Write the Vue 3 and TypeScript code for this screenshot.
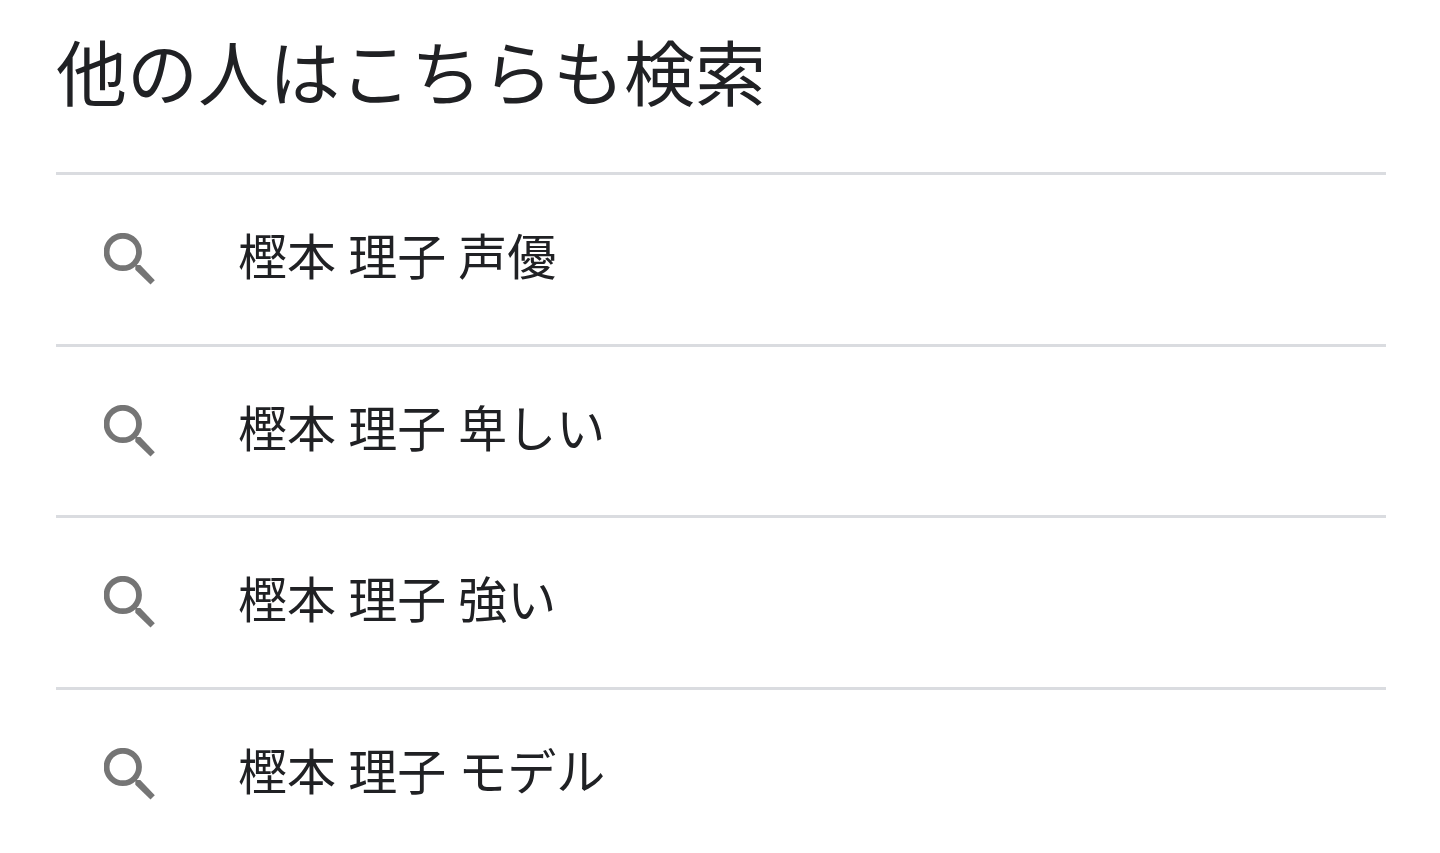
<script setup lang="ts">
const title: string = '他の人はこちらも検索'
const searches: string[] = ['樫本 理子 声優', '樫本 理子 卑しい', '樫本 理子 強い', '樫本 理子 モデル']
</script>

<template>
  <main class="related" lang="ja">
    <h1>{{ title }}</h1>
    <ul>
      <li v-for="query in searches" :key="query">
        <a href="#">
          <svg viewBox="0 0 52 52" aria-hidden="true">
            <circle cx="18.8" cy="19" r="16.2" />
            <path d="M31.3 32.5 32 32H36.3L50.8 47.2 46.5 51.5 31.3 36.8Z" />
          </svg>
          <span>{{ query }}</span>
        </a>
      </li>
    </ul>
  </main>
</template>

<style>
body {
  margin: 0;
  background: #fff;
}
</style>

<style scoped>
.related {
  padding: 26px 54px 0 56px;
  color: #202124;
  font-family: Roboto, "Noto Sans CJK JP", sans-serif;
}
h1 {
  margin: 0;
  padding-bottom: 46px;
  font-size: 71px;
  font-weight: 400;
  line-height: 100px;
}
ul {
  display: grid;
  grid-auto-rows: 1fr;
  min-height: 686px;
  margin: 0;
  padding: 0;
  list-style: none;
}
li {
  display: grid;
  border-top: 3px solid #dadce0;
}
a {
  display: flex;
  align-items: center;
  gap: 82px;
  padding-left: 48px;
  color: inherit;
  font-size: 49px;
  line-height: 72px;
  text-decoration: none;
}
svg {
  flex: none;
  width: 52px;
  height: 52px;
}
circle {
  fill: none;
  stroke: #757575;
  stroke-width: 5.8;
}
path {
  fill: #757575;
}
</style>
